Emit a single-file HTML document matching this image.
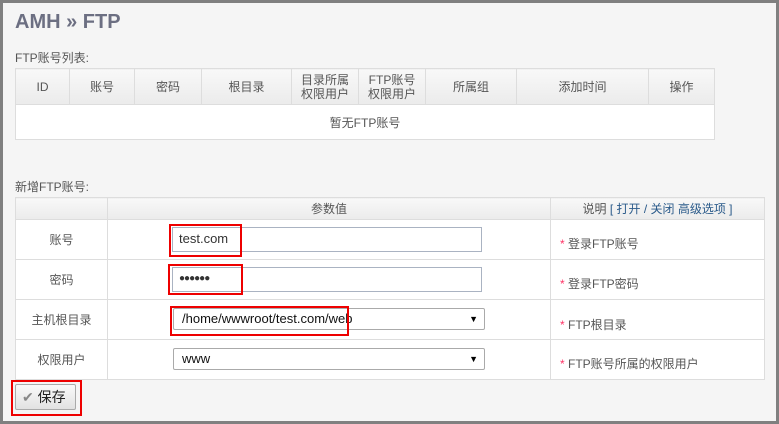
<!DOCTYPE html>
<html><head><meta charset="utf-8"><style>
*{box-sizing:border-box;margin:0;padding:0}
body{width:779px;height:424px;background:#808080;font-family:"Liberation Sans","Noto Sans CJK SC",sans-serif;font-size:12px;color:#555;position:relative;overflow:hidden}
.frame{position:absolute;left:3px;top:3px;width:773px;height:418px;background:#f5f5f5}
.a{position:absolute}
h1{position:absolute;left:15px;top:11px;font-size:20px;font-weight:bold;color:#6c6f82}
table{position:absolute;border-collapse:collapse;background:#fff}
td,th{border:1px solid #ddd;text-align:center;font-weight:normal;color:#555}
th{background:linear-gradient(#f8f8f8,#ebebeb)}
.inp{position:absolute;background:#fff;border:1px solid #aab3c2;font-size:13px;color:#333;padding-left:6px;line-height:22px}
.sel{position:absolute;background:#fff;border:1px solid #aaa;border-radius:2px;font-size:13px;color:#111;padding-left:8px;line-height:20px}
.sel:after{content:"▼";position:absolute;right:6px;top:0;font-size:9px;color:#000}
.red{position:absolute;border:2px solid #e00}
.star{color:#f36}
.d{position:absolute;left:560px;font-size:12px;color:#555}
</style></head><body>
<div class="frame"></div>
<h1>AMH » FTP</h1>
<div class="a" style="left:15px;top:49px">FTP账号列表:</div>
<table style="left:15px;top:68px;width:700px">
<tr style="height:36px;line-height:14px"><th style="width:54px">ID</th><th style="width:65px">账号</th><th style="width:67px">密码</th><th style="width:90px">根目录</th><th style="width:67px">目录所属<br>权限用户</th><th style="width:67px">FTP账号<br>权限用户</th><th style="width:91px">所属组</th><th style="width:132px">添加时间</th><th>操作</th></tr>
<tr style="height:35px"><td colspan="9">暂无FTP账号</td></tr>
</table>
<div class="a" style="left:15px;top:178px">新增FTP账号:</div>
<table style="left:15px;top:197px;width:750px">
<tr style="height:22px"><th style="width:92px"></th><th style="width:443px">参数值</th><th>说明 <span style="color:#2a5a8a">[ 打开 / 关闭 高级选项 ]</span></th></tr>
<tr style="height:40px"><td>账号</td><td></td><td></td></tr>
<tr style="height:40px"><td>密码</td><td></td><td></td></tr>
<tr style="height:40px"><td>主机根目录</td><td></td><td></td></tr>
<tr style="height:40px"><td>权限用户</td><td></td><td></td></tr>
</table>
<div class="inp" style="left:172px;top:227px;width:310px;height:25px">test.com</div>
<div class="inp" style="left:172px;top:267px;width:310px;height:25px;font-size:10px;letter-spacing:-1px">●●●●●●</div>
<div class="sel" style="left:173px;top:308px;width:312px;height:22px">/home/wwwroot/test.com/web</div>
<div class="sel" style="left:173px;top:348px;width:312px;height:22px">www</div>
<div class="d" style="top:235px"><span class="star">*</span> 登录FTP账号</div>
<div class="d" style="top:275px"><span class="star">*</span> 登录FTP密码</div>
<div class="d" style="top:316px"><span class="star">*</span> FTP根目录</div>
<div class="d" style="top:355px"><span class="star">*</span> FTP账号所属的权限用户</div>
<div class="a" style="left:15px;top:384px;width:61px;height:26px;border:1px solid #aaa;border-radius:2px;background:linear-gradient(#fafafa,#e2e2e2);font-size:14px;color:#222;line-height:24px;padding-left:6px"><span style="color:#888">✔</span> 保存</div>
<div class="red" style="left:169px;top:224px;width:73px;height:33px"></div>
<div class="red" style="left:168px;top:264px;width:75px;height:31px"></div>
<div class="red" style="left:170px;top:306px;width:179px;height:30px"></div>
<div class="red" style="left:11px;top:380px;width:71px;height:36px"></div>
</body></html>
